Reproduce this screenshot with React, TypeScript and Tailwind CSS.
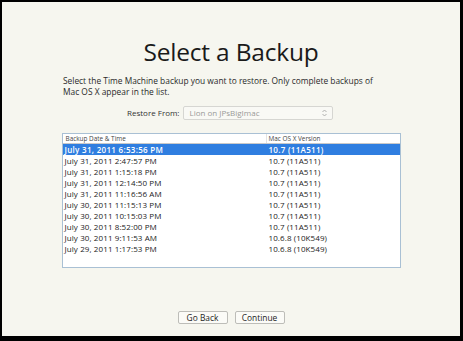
import React from 'react';

const backups = [
  { date: 'July 31, 2011 6:53:56 PM', version: '10.7 (11A511)' },
  { date: 'July 31, 2011 2:47:57 PM', version: '10.7 (11A511)' },
  { date: 'July 31, 2011 1:15:18 PM', version: '10.7 (11A511)' },
  { date: 'July 31, 2011 12:14:50 PM', version: '10.7 (11A511)' },
  { date: 'July 31, 2011 11:16:56 AM', version: '10.7 (11A511)' },
  { date: 'July 30, 2011 11:15:13 PM', version: '10.7 (11A511)' },
  { date: 'July 30, 2011 10:15:03 PM', version: '10.7 (11A511)' },
  { date: 'July 30, 2011 8:52:00 PM', version: '10.7 (11A511)' },
  { date: 'July 30, 2011 9:11:53 AM', version: '10.6.8 (10K549)' },
  { date: 'July 29, 2011 1:17:53 PM', version: '10.6.8 (10K549)' },
];

const App: React.FC = () => {
  return (
    <div className="w-[463px] h-[341px] bg-black pt-[2px] pl-[2px] pr-[3px] pb-[5px] font-['Open_Sans',sans-serif]">
      <div className="h-full bg-[#f6f6ef] flex flex-col items-center text-[#222]">
        {/* title */}
        <h1 className="mt-[33px] text-[24.5px] leading-[34px] tracking-[-0.2px] text-[#1a1a1a]">Select a Backup</h1>

        <p className="self-start mt-[6px] ml-[61px] w-[318px] text-[8.4px] leading-[11px] text-[#2a2a2a]">
          Select the Time Machine backup you want to restore. Only complete backups of Mac OS X appear in the list.
        </p>

        {/* restore from */}
        <div className="self-start mt-[9px] ml-[125px] flex items-center gap-[4px]">
          <span className="text-[8px] leading-[14px] text-[#333]">Restore From:</span>
          <div className="w-[150px] h-[14px] border border-[#d6d6d2] rounded-[2px] bg-[#f9f9f5] flex items-center justify-between px-[5px]">
            <span className="text-[8px] leading-[12px] text-[#9a9a98]">Lion on JPsBigImac</span>
            <svg width="5" height="8" viewBox="0 0 5 8" className="text-[#a8a8a8]">
              <path d="M0.5 3 L2.5 1 L4.5 3" fill="none" stroke="currentColor" strokeWidth="0.9" />
              <path d="M0.5 5 L2.5 7 L4.5 5" fill="none" stroke="currentColor" strokeWidth="0.9" />
            </svg>
          </div>
        </div>

        {/* table */}
        <div className="mt-[13px] w-[339px] h-[135px] border border-[#a9c0d4] bg-white">
          <div className="h-[10px] flex items-center border-b border-[#c9c9c9] text-[6.4px] leading-[9px] text-[#444] bg-white">
            <span className="w-[204px] pl-[3px] border-r border-[#e2e2e2]">Backup Date &amp; Time</span>
            <span className="pl-[2px]">Mac OS X Version</span>
          </div>
          {backups.map((b, i) => (
            <div
              key={b.date}
              className={
                i === 0
                  ? 'h-[11px] flex items-center bg-[#2f7ee0] text-white text-[8px] leading-[11px] font-semibold tracking-[0.3px]'
                  : 'h-[11px] flex items-center text-[8px] leading-[11px] tracking-[0.1px] text-[#222]'
              }
            >
              <span className="w-[204px] pl-[2px]">{b.date}</span>
              <span className="pl-[2px]">{b.version}</span>
            </div>
          ))}
        </div>

        {/* buttons */}
        <div className="mt-auto mb-[12px] flex gap-[7px]">
          <button className="w-[50px] h-[13px] border border-[#bdbdb8] rounded-[2px] bg-[#fbfbf7] text-[8.4px] leading-[11px] text-[#222]">Go Back</button>
          <button className="w-[50px] h-[13px] border border-[#bdbdb8] rounded-[2px] bg-[#fbfbf7] text-[8.4px] leading-[11px] text-[#222]">Continue</button>
        </div>
      </div>
    </div>
  );
};

export default App;
